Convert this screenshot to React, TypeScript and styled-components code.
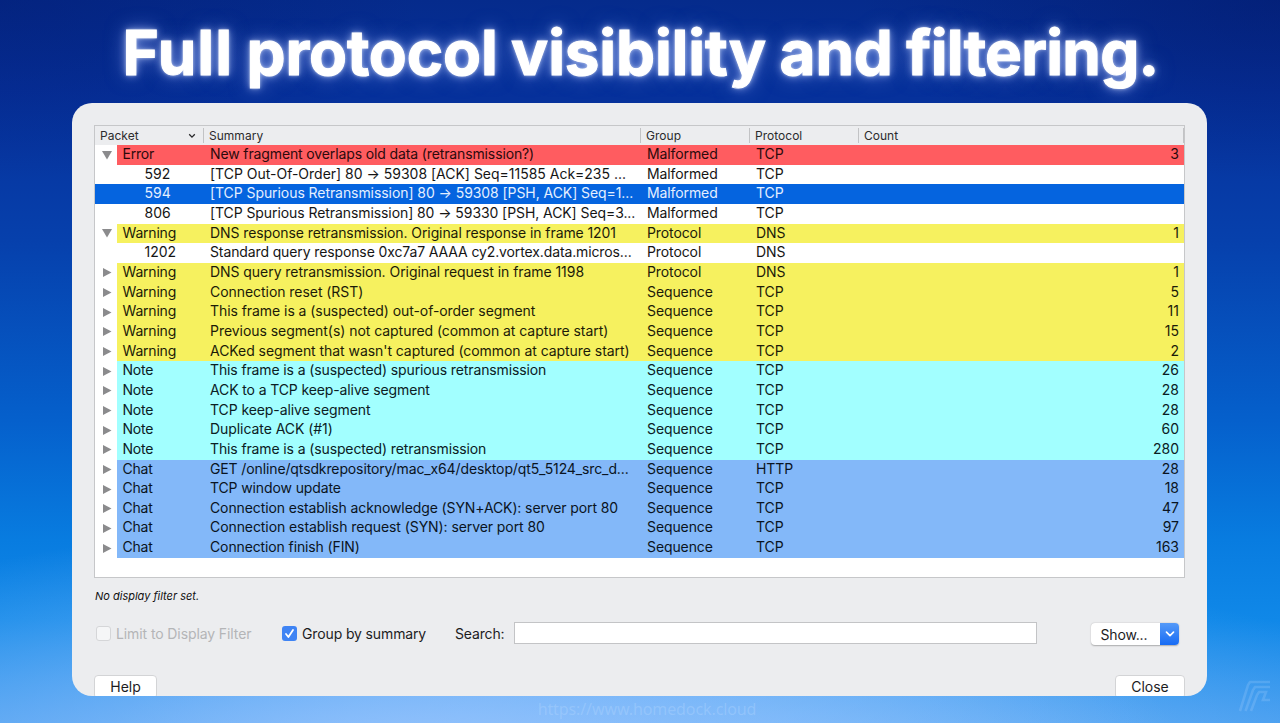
import React from "react";
import styled, { createGlobalStyle, css } from "styled-components";

const GlobalStyle = createGlobalStyle`
  *, *::before, *::after { box-sizing: border-box; }
  body { margin: 0; background: #0a4fc0; }
`;

const Stage = styled.main`
  position: relative;
  display: flex;
  flex-direction: column;
  align-items: center;
  width: 1280px;
  height: 723px;
  overflow: hidden;
  font-family: Inter, "Liberation Sans", sans-serif;
  background:
    radial-gradient(ellipse 760px 240px at 33% 105%, rgba(160, 200, 255, 0.85), rgba(150, 195, 255, 0) 100%),
    radial-gradient(ellipse 700px 200px at 62% 106%, rgba(150, 200, 255, 0.6), rgba(150, 195, 255, 0) 100%),
    radial-gradient(ellipse 420px 180px at 0% 0%, rgba(2, 24, 110, 0.4), rgba(2, 24, 110, 0)),
    radial-gradient(ellipse 420px 180px at 100% 0%, rgba(2, 20, 100, 0.45), rgba(2, 24, 110, 0)),
    linear-gradient(180deg, #052b8c 0, #06309a 90px, #0640ac 240px, #0560cc 420px, #087ce0 540px, #1088e8 620px, #409aee 723px);
`;

const Headline = styled.h1`
  margin: 0;
  height: 103px;
  padding: 15px 0 0 1px;
  font-size: 62px;
  line-height: 75px;
  font-weight: 700;
  letter-spacing: -0.15px;
  word-spacing: -1px;
  white-space: nowrap;
  color: #fff;
  -webkit-text-stroke: 1px #fff;
  text-shadow: 0 0 3px rgba(255, 255, 255, 0.7), 0 0 8px rgba(190, 208, 255, 0.75), 0 0 20px rgba(140, 168, 255, 0.6);
`;

const Word = styled.span<{ $track: number }>`
  letter-spacing: ${(p) => p.$track}px;
`;

const Panel = styled.section`
  display: flex;
  flex-direction: column;
  width: 1135px;
  height: 593px;
  margin-right: 1px;
  padding: 22px 22px 0;
  overflow: hidden;
  border-radius: 20px;
  background: #ecedef;
`;

const Table = styled.div`
  height: 453px;
  flex: none;
  display: flex;
  flex-direction: column;
  border: 1px solid #c6c7c9;
  background: #fff;
`;

const columns = css`
  display: grid;
  grid-template-columns: 109px 437px 109px 109px 1fr;
`;

const HeaderRow = styled.div`
  ${columns}
  flex: none;
  height: 19px;
  padding-top: 2px;
  background: #ecedef;
  font-size: 12px;
  line-height: 14px;
  letter-spacing: 0.02px;
  color: #2b2b2d;
`;

const HeaderCell = styled.div`
  display: flex;
  align-items: center;
  justify-content: space-between;
  height: 15px;
  padding: 0 7px 0 5px;
  border-right: 1px solid #c2c3c5;
`;

type Tone = "error" | "warning" | "note" | "chat" | "plain" | "selected";

const fills: Record<Tone, string> = {
  error: "#ff5c60",
  warning: "#f6f15f",
  note: "#a2ffff",
  chat: "#83b8f9",
  plain: "#ffffff",
  selected: "#0564df",
};
const inks: Record<Tone, string> = {
  error: "#2c0a0c",
  warning: "#1c1b08",
  note: "#0b2024",
  chat: "#0a1422",
  plain: "#151515",
  selected: "#e4efff",
};

const Row = styled.div<{ $tone: Tone }>`
  ${columns}
  flex: none;
  height: 19.67px;
  font-size: 14px;
  line-height: 18.8px;
  letter-spacing: -0.1px;
  white-space: nowrap;
  color: ${(p) => inks[p.$tone]};
  background: ${(p) =>
    p.$tone === "selected" || p.$tone === "plain"
      ? fills[p.$tone]
      : `linear-gradient(90deg, #fff 22px, ${fills[p.$tone]} 22px)`};
`;

const PacketCell = styled.div<{ $child: boolean }>`
  display: flex;
  gap: 10.5px;
  padding-left: ${(p) => (p.$child ? 49.5 : 7)}px;
  letter-spacing: ${(p) => (p.$child ? 0 : -0.2)}px;
`;

const Cell = styled.div`
  padding-left: 6px;
`;

const Fitted = styled.span<{ $track: number }>`
  letter-spacing: ${(p) => p.$track}px;
`;

const CountCell = styled.div`
  padding-right: 5px;
  letter-spacing: 0;
  text-align: right;
`;

const Marker = styled.svg`
  flex: none;
  width: 10px;
  height: 10px;
  margin-top: 4.5px;
  fill: #8b8b8d;
`;

const FilterStatus = styled.p`
  flex: none;
  margin: 10px 0 0 1px;
  height: 17px;
  font-size: 11px;
  line-height: 17px;
  font-style: italic;
  color: #111;
`;

const Controls = styled.div`
  display: flex;
  flex: none;
  align-items: center;
  height: 24px;
  margin-top: 16px;
  padding-left: 2px;
  font-size: 14px;
  line-height: 18px;
  color: #1c1c1e;
`;

const CheckLabel = styled.label<{ $off?: boolean }>`
  display: flex;
  align-items: center;
  flex: none;
  gap: 5px;
  width: ${(p) => (p.$off ? 186 : 144)}px;
  padding-top: 1px;
  letter-spacing: ${(p) => (p.$off ? -0.1 : -0.13)}px;
  white-space: nowrap;
  color: ${(p) => (p.$off ? "#b4b5b7" : "#1c1c1e")};
`;

const LabelText = styled.span`
  padding-top: 1px;
`;

const Box = styled.span<{ $on?: boolean }>`
  display: grid;
  place-items: center;
  width: 15px;
  height: 15px;
  border-radius: 3px;
  border: ${(p) => (p.$on ? "none" : "1px solid #d5d6d8")};
  background: ${(p) => (p.$on ? "#3f84f4" : "#f5f6f7")};
`;

const SearchLabel = styled.span`
  flex: none;
  width: 60px;
  margin-left: 29px;
  padding-top: 2px;
  letter-spacing: -0.15px;
`;

const SearchField = styled.input`
  width: 523px;
  height: 22px;
  margin-left: -1px;
  padding: 0 6px;
  border: 1px solid #c3c4c6;
  background: #fff;
  outline: none;
`;

const ShowButton = styled.button`
  display: flex;
  width: 88px;
  height: 22px;
  margin-left: auto;
  margin-right: 6px;
  margin-top: 1px;
  padding: 0;
  border: 0;
  border-radius: 4px;
  overflow: hidden;
  background: #fff;
  box-shadow: 0 0.5px 1.5px rgba(0, 0, 0, 0.28);
  font: inherit;
  line-height: 23px;
  letter-spacing: -0.15px;
  color: #1c1c1e;
`;

const ShowText = styled.span`
  width: 69px;
  padding-left: 9.5px;
  text-align: left;
`;

const ShowArrow = styled.span`
  display: grid;
  place-items: center;
  flex: 1;
  height: 22px;
  background: linear-gradient(#559af8, #176bf4);
`;

const Footer = styled.div`
  display: flex;
  flex: none;
  justify-content: space-between;
  margin-top: 30px;
`;

const PushButton = styled.button<{ $w: number }>`
  width: ${(p) => p.$w}px;
  height: 24px;
  padding: 0;
  border: 1px solid #d3d4d6;
  border-radius: 4px;
  background: #fff;
  font: 14px/22px Inter, "Liberation Sans", sans-serif;
  color: #1c1c1e;
`;

const SiteLink = styled.div`
  margin: 2px 0 0 14px;
  font-family: "Noto Sans", sans-serif;
  font-size: 16px;
  line-height: 22px;
  letter-spacing: -0.1px;
  color: rgba(178, 214, 255, 0.38);
`;

const Logo = styled.svg`
  position: absolute;
  left: 1238px;
  top: 680px;
  width: 34px;
  height: 34px;
  fill: none;
  stroke: rgba(190, 222, 255, 0.2);
  stroke-width: 2.6;
`;

type Item = [Tone, "open" | "closed" | "child", string, string, string, string, string, number];

const items: Item[] = [
  ["error", "open", "Error", "New fragment overlaps old data (retransmission?)", "Malformed", "TCP", "3", -0.125],
  ["plain", "child", "592", "[TCP Out-Of-Order] 80 → 59308 [ACK] Seq=11585 Ack=235 ...", "Malformed", "TCP", "", -0.01],
  ["selected", "child", "594", "[TCP Spurious Retransmission] 80 → 59308 [PSH, ACK] Seq=1...", "Malformed", "TCP", "", -0.07],
  ["plain", "child", "806", "[TCP Spurious Retransmission] 80 → 59330 [PSH, ACK] Seq=3...", "Malformed", "TCP", "", -0.08],
  ["warning", "open", "Warning", "DNS response retransmission. Original response in frame 1201", "Protocol", "DNS", "1", -0.09],
  ["plain", "child", "1202", "Standard query response 0xc7a7 AAAA cy2.vortex.data.micros...", "Protocol", "DNS", "", -0.12],
  ["warning", "closed", "Warning", "DNS query retransmission. Original request in frame 1198", "Protocol", "DNS", "1", -0.055],
  ["warning", "closed", "Warning", "Connection reset (RST)", "Sequence", "TCP", "5", -0.05],
  ["warning", "closed", "Warning", "This frame is a (suspected) out-of-order segment", "Sequence", "TCP", "11", -0.06],
  ["warning", "closed", "Warning", "Previous segment(s) not captured (common at capture start)", "Sequence", "TCP", "15", -0.045],
  ["warning", "closed", "Warning", "ACKed segment that wasn't captured (common at capture start)", "Sequence", "TCP", "2", -0.055],
  ["note", "closed", "Note", "This frame is a (suspected) spurious retransmission", "Sequence", "TCP", "26", -0.125],
  ["note", "closed", "Note", "ACK to a TCP keep-alive segment", "Sequence", "TCP", "28", -0.12],
  ["note", "closed", "Note", "TCP keep-alive segment", "Sequence", "TCP", "28", -0.08],
  ["note", "closed", "Note", "Duplicate ACK (#1)", "Sequence", "TCP", "60", -0.06],
  ["note", "closed", "Note", "This frame is a (suspected) retransmission", "Sequence", "TCP", "280", -0.125],
  ["chat", "closed", "Chat", "GET /online/qtsdkrepository/mac_x64/desktop/qt5_5124_src_d...", "Sequence", "HTTP", "28", -0.12],
  ["chat", "closed", "Chat", "TCP window update", "Sequence", "TCP", "18", -0.12],
  ["chat", "closed", "Chat", "Connection establish acknowledge (SYN+ACK): server port 80", "Sequence", "TCP", "47", -0.11],
  ["chat", "closed", "Chat", "Connection establish request (SYN): server port 80", "Sequence", "TCP", "97", -0.08],
  ["chat", "closed", "Chat", "Connection finish (FIN)", "Sequence", "TCP", "163", -0.12],
];

export default function App() {
  return (
    <Stage>
      <GlobalStyle />
      <Headline>
        <Word $track={1}>Full</Word> protocol visibility and <Word $track={-0.75}>filtering.</Word>
      </Headline>
      <Panel>
        <Table>
          <HeaderRow>
            <HeaderCell>
              Packet
              <svg width="8" height="6" viewBox="0 0 8 6" fill="none" stroke="#2b2b2d" strokeWidth="1.3">
                <path d="M1.2 1.3 4 4.1l2.8-2.8" />
              </svg>
            </HeaderCell>
            <HeaderCell>Summary</HeaderCell>
            <HeaderCell>Group</HeaderCell>
            <HeaderCell>Protocol</HeaderCell>
            <HeaderCell>Count</HeaderCell>
          </HeaderRow>
          {items.map(([tone, kind, packet, summary, group, protocol, count, track], i) => (
            <Row key={i} $tone={tone}>
              <PacketCell $child={kind === "child"}>
                {kind !== "child" && (
                  <Marker viewBox="0 0 10 10">
                    <path d={kind === "open" ? "M0 1h10L5 9.5z" : "M1 1v9l8.5-4.5z"} />
                  </Marker>
                )}
                {packet}
              </PacketCell>
              <Cell>
                <Fitted $track={track}>{summary}</Fitted>
              </Cell>
              <Cell>{group}</Cell>
              <Cell>{protocol}</Cell>
              <CountCell>{count}</CountCell>
            </Row>
          ))}
        </Table>
        <FilterStatus>No display filter set.</FilterStatus>
        <Controls>
          <CheckLabel $off>
            <Box />
            <LabelText>Limit to Display Filter</LabelText>
          </CheckLabel>
          <CheckLabel>
            <Box $on>
              <svg width="15" height="15" viewBox="0 0 15 15" fill="none" stroke="#fff" strokeWidth="1.8" strokeLinecap="round" strokeLinejoin="round">
                <path d="m4 8 2.4 3L11 4" />
              </svg>
            </Box>
            <LabelText>Group by summary</LabelText>
          </CheckLabel>
          <SearchLabel>Search:</SearchLabel>
          <SearchField aria-label="Search" />
          <ShowButton>
            <ShowText>Show...</ShowText>
            <ShowArrow>
              <svg width="10" height="8" viewBox="0 0 10 8" fill="none" stroke="#fff" strokeWidth="1.7" strokeLinecap="round" strokeLinejoin="round">
                <path d="m1.5 2.2 3.5 3.4 3.5-3.4" />
              </svg>
            </ShowArrow>
          </ShowButton>
        </Controls>
        <Footer>
          <PushButton $w={63}>Help</PushButton>
          <PushButton $w={70}>Close</PushButton>
        </Footer>
      </Panel>
      <SiteLink>https://www.homedock.cloud</SiteLink>
      <Logo viewBox="0 0 34 34">
        <path d="M2 31 10 5l2-3h20" />
        <path d="M7.5 31 15 10l2-3h15" />
        <path d="M13 31 19 15l2-3h7l-3 8h7" />
      </Logo>
    </Stage>
  );
}
